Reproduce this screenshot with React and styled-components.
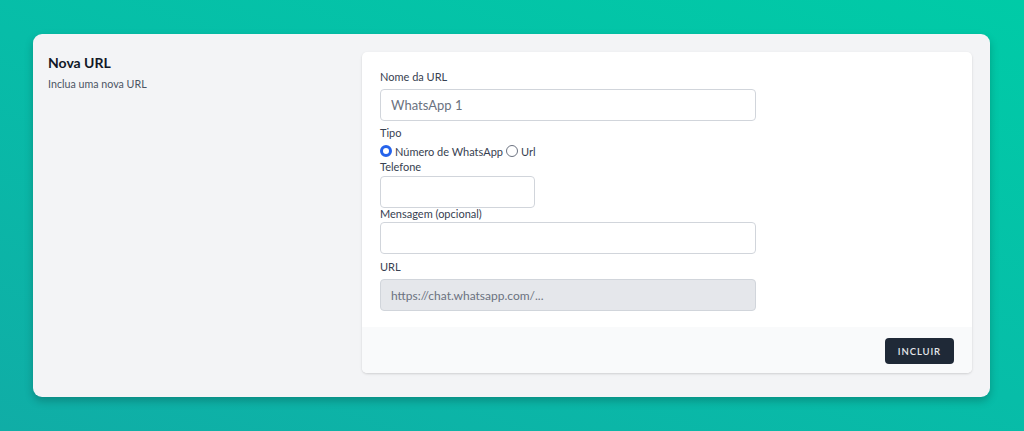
import React from 'react'
import styled, { createGlobalStyle } from 'styled-components'

const GlobalStyle = createGlobalStyle`
  * {
    box-sizing: border-box;
  }

  body {
    margin: 0;
    font-family: 'Lato', 'Noto Sans', sans-serif;
    background: linear-gradient(20deg, #10ada6 0%, #07bda8 50%, #00cba7 100%);
    min-height: 431px;
  }
`

const Page = styled.div`
  padding: 34px 34px 34px 33px;
`

const Card = styled.section`
  display: grid;
  grid-template-columns: 1fr 610px;
  background-color: #f3f4f6;
  border-radius: 9px;
  padding: 18px 18px 24px 15px;
  box-shadow: 0 4px 8px rgba(0, 0, 0, 0.22);
`

const Intro = styled.div`
  padding-top: 1px;
`

const Title = styled.h2`
  margin: 0;
  font-size: 14px;
  line-height: 20px;
  font-weight: 700;
  color: #111827;
`

const Subtitle = styled.p`
  margin: 3px 0 0;
  font-size: 10.7px;
  line-height: 16px;
  color: #4b5563;
`

const Panel = styled.form`
  background-color: #ffffff;
  border-radius: 5px;
  overflow: hidden;
  box-shadow: 0 1px 3px rgba(0, 0, 0, 0.1), 0 1px 2px rgba(0, 0, 0, 0.06);
`

const Body = styled.div`
  display: flex;
  flex-direction: column;
  padding: 17px 18px 16px;
`

const Label = styled.label`
  display: block;
  font-size: 11px;
  line-height: 16px;
  color: #374151;
  margin-top: ${(p) => p.$top || 0}px;
`

const Input = styled.input`
  display: block;
  width: ${(p) => p.$width || 376}px;
  height: 32px;
  margin-top: ${(p) => p.$top || 0}px;
  padding: 0 10px;
  border: 1px solid #d1d5db;
  border-radius: 4px;
  font-family: inherit;
  font-size: 13px;
  color: #374151;
  background-color: ${(p) => (p.disabled ? '#e5e7eb' : '#ffffff')};
  outline: none;

  &::placeholder {
    color: #6b7280;
  }

  &:disabled {
    font-size: 12px;
    color: #6b7280;
  }
`

const RadioRow = styled.div`
  display: flex;
  align-items: center;
  gap: 3px;
  height: 16px;
  margin-top: 2px;
`

const RadioOption = styled.label`
  display: flex;
  align-items: center;
  gap: 3px;
  font-size: 11px;
  color: #374151;
`

const RadioDot = styled.span`
  width: 12px;
  height: 12px;
  border-radius: 50%;
  border: ${(p) => (p.$checked ? '3.5px solid #2563eb' : '1px solid #6b7280')};
  background-color: #ffffff;
`

const Footer = styled.div`
  display: flex;
  justify-content: flex-end;
  padding: 11px 18px 9px;
  background-color: #f9fafb;
`

const Button = styled.button`
  height: 26px;
  padding: 0 13px;
  border: none;
  border-radius: 4px;
  background-color: #1f2937;
  color: #e5e7eb;
  font-family: inherit;
  font-size: 9.5px;
  font-weight: 600;
  letter-spacing: 0.9px;
  text-transform: uppercase;
  cursor: pointer;
`

const App = () => {
  return (
    <>
      <GlobalStyle />
      <Page>
        <Card>
          <Intro>
            <Title>Nova URL</Title>
            <Subtitle>Inclua uma nova URL</Subtitle>
          </Intro>
          <Panel onSubmit={(e) => e.preventDefault()}>
            <Body>
              <Label>Nome da URL</Label>
              <Input $top={4} placeholder="WhatsApp 1" />

              <Label $top={4}>Tipo</Label>
              <RadioRow>
                <RadioOption>
                  <RadioDot $checked />
                  Número de WhatsApp
                </RadioOption>
                <RadioOption>
                  <RadioDot />
                  Url
                </RadioOption>
              </RadioRow>

              <Label>Telefone</Label>
              <Input $top={1} $width={155} />

              <Label $top={-2}>Mensagem (opcional)</Label>
              <Input />

              <Label $top={5}>URL</Label>
              <Input $top={4} disabled value="https://chat.whatsapp.com/..." readOnly />
            </Body>
            <Footer>
              <Button type="submit">Incluir</Button>
            </Footer>
          </Panel>
        </Card>
      </Page>
    </>
  )
}

export default App
